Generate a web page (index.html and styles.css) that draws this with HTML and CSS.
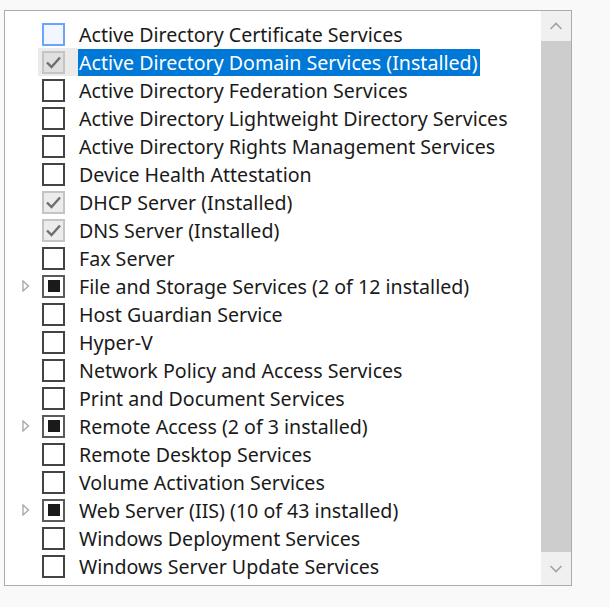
FILE: index.html
```html
<!DOCTYPE html>
<html>
<head>
<meta charset="utf-8">
<link rel="stylesheet" href="styles.css">
</head>
<body>
<div class="frame">
  <div class="list">
    <div class="row"><span class="exp"></span><span class="cbcell"><span class="cb hover"></span></span><span class="label">Active Directory Certificate Services</span></div>
    <div class="row selected"><span class="exp"></span><span class="cbcell"><span class="cb checked"><svg viewBox="0 0 19 19"><polyline points="3,9.5 7.5,14 16,4.5"/></svg></span></span><span class="label">Active Directory Domain Services (Installed)</span></div>
    <div class="row"><span class="exp"></span><span class="cbcell"><span class="cb"></span></span><span class="label">Active Directory Federation Services</span></div>
    <div class="row"><span class="exp"></span><span class="cbcell"><span class="cb"></span></span><span class="label">Active Directory Lightweight Directory Services</span></div>
    <div class="row"><span class="exp"></span><span class="cbcell"><span class="cb"></span></span><span class="label">Active Directory Rights Management Services</span></div>
    <div class="row"><span class="exp"></span><span class="cbcell"><span class="cb"></span></span><span class="label">Device Health Attestation</span></div>
    <div class="row"><span class="exp"></span><span class="cbcell"><span class="cb checked"><svg viewBox="0 0 19 19"><polyline points="3,9.5 7.5,14 16,4.5"/></svg></span></span><span class="label">DHCP Server (Installed)</span></div>
    <div class="row"><span class="exp"></span><span class="cbcell"><span class="cb checked"><svg viewBox="0 0 19 19"><polyline points="3,9.5 7.5,14 16,4.5"/></svg></span></span><span class="label">DNS Server (Installed)</span></div>
    <div class="row"><span class="exp"></span><span class="cbcell"><span class="cb"></span></span><span class="label">Fax Server</span></div>
    <div class="row"><span class="exp"><svg viewBox="0 0 8 12"><polygon points="1,1 6.5,6 1,11"/></svg></span><span class="cbcell"><span class="cb partial"><span class="fill"></span></span></span><span class="label">File and Storage Services (2 of 12 installed)</span></div>
    <div class="row"><span class="exp"></span><span class="cbcell"><span class="cb"></span></span><span class="label">Host Guardian Service</span></div>
    <div class="row"><span class="exp"></span><span class="cbcell"><span class="cb"></span></span><span class="label">Hyper-V</span></div>
    <div class="row"><span class="exp"></span><span class="cbcell"><span class="cb"></span></span><span class="label">Network Policy and Access Services</span></div>
    <div class="row"><span class="exp"></span><span class="cbcell"><span class="cb"></span></span><span class="label">Print and Document Services</span></div>
    <div class="row"><span class="exp"><svg viewBox="0 0 8 12"><polygon points="1,1 6.5,6 1,11"/></svg></span><span class="cbcell"><span class="cb partial"><span class="fill"></span></span></span><span class="label">Remote Access (2 of 3 installed)</span></div>
    <div class="row"><span class="exp"></span><span class="cbcell"><span class="cb"></span></span><span class="label">Remote Desktop Services</span></div>
    <div class="row"><span class="exp"></span><span class="cbcell"><span class="cb"></span></span><span class="label">Volume Activation Services</span></div>
    <div class="row"><span class="exp"><svg viewBox="0 0 8 12"><polygon points="1,1 6.5,6 1,11"/></svg></span><span class="cbcell"><span class="cb partial"><span class="fill"></span></span></span><span class="label">Web Server (IIS) (10 of 43 installed)</span></div>
    <div class="row"><span class="exp"></span><span class="cbcell"><span class="cb"></span></span><span class="label">Windows Deployment Services</span></div>
    <div class="row"><span class="exp"></span><span class="cbcell"><span class="cb"></span></span><span class="label">Windows Server Update Services</span></div>
  </div>
  <div class="scroll">
    <div class="sbtn up"><svg viewBox="0 0 14 8"><polyline points="1.5,7 7,1.5 12.5,7"/></svg></div>
    <div class="thumb"></div>
    <div class="sbtn down"><svg viewBox="0 0 14 8"><polyline points="1.5,1 7,6.5 12.5,1"/></svg></div>
  </div>
</div>
</body>
</html>
```

FILE: styles.css
```css
html, body {
  margin: 0;
  padding: 0;
  background: #f9f9f9;
}
.frame {
  margin: 10px 0 0 4px;
  width: 568px;
  height: 576px;
  box-sizing: border-box;
  border: 1px solid #ababab;
  background: #ffffff;
  display: flex;
  overflow: hidden;
}
.list {
  flex: 1;
  padding-top: 9px;
  font-family: "Noto Sans", "Open Sans", sans-serif;
  font-size: 19.6px;
  color: #1a1a1a;
}
.row {
  height: 28px;
  display: flex;
  align-items: center;
}
.exp {
  width: 33px;
  height: 28px;
  display: flex;
  align-items: center;
  box-sizing: border-box;
  padding-left: 17px;
}
.exp svg {
  width: 8px;
  height: 12px;
}
.exp polygon {
  fill: none;
  stroke: #a6a6a6;
  stroke-width: 1.3;
}
.cbcell {
  width: 40px;
  height: 28px;
  display: flex;
  align-items: center;
  box-sizing: border-box;
  padding-left: 4px;
}
.row.selected .cbcell {
  background: #ebebeb;
}
.cb {
  width: 23px;
  height: 23px;
  box-sizing: border-box;
  border: 2px solid #444444;
  background: #ffffff;
  display: flex;
  align-items: center;
  justify-content: center;
}
.cb.hover {
  border-color: #6aa4ff;
  background: #f2f7ff;
}
.cb.checked {
  border-color: #c4c4c4;
  background: #ececec;
}
.row.selected .cb.checked {
  background: #e0e0e0;
}
.cb svg {
  width: 19px;
  height: 19px;
}
.cb polyline {
  fill: none;
  stroke: #6e6e6e;
  stroke-width: 2.4;
}
.cb.partial {
  border-color: #5a5a5a;
}
.cb .fill {
  width: 12px;
  height: 12px;
  background: #1a1a1a;
}
.label {
  padding: 1px 2px 0 1px;
  line-height: 27px;
  white-space: nowrap;
}
.row.selected .label {
  background: #0078d7;
  color: #ffffff;
  padding-top: 0;
}
.scroll {
  width: 30px;
  display: flex;
  flex-direction: column;
  background: #f0f0f0;
}
.sbtn {
  display: flex;
  align-items: center;
  justify-content: center;
  background: #f0f0f0;
}
.sbtn.up {
  height: 30px;
}
.sbtn.down {
  height: 33px;
}
.sbtn svg {
  width: 14px;
  height: 8px;
}
.sbtn polyline {
  fill: none;
  stroke: #a3a3a3;
  stroke-width: 1.6;
}
.thumb {
  flex: 1;
  background: #cdcdcd;
}
```
